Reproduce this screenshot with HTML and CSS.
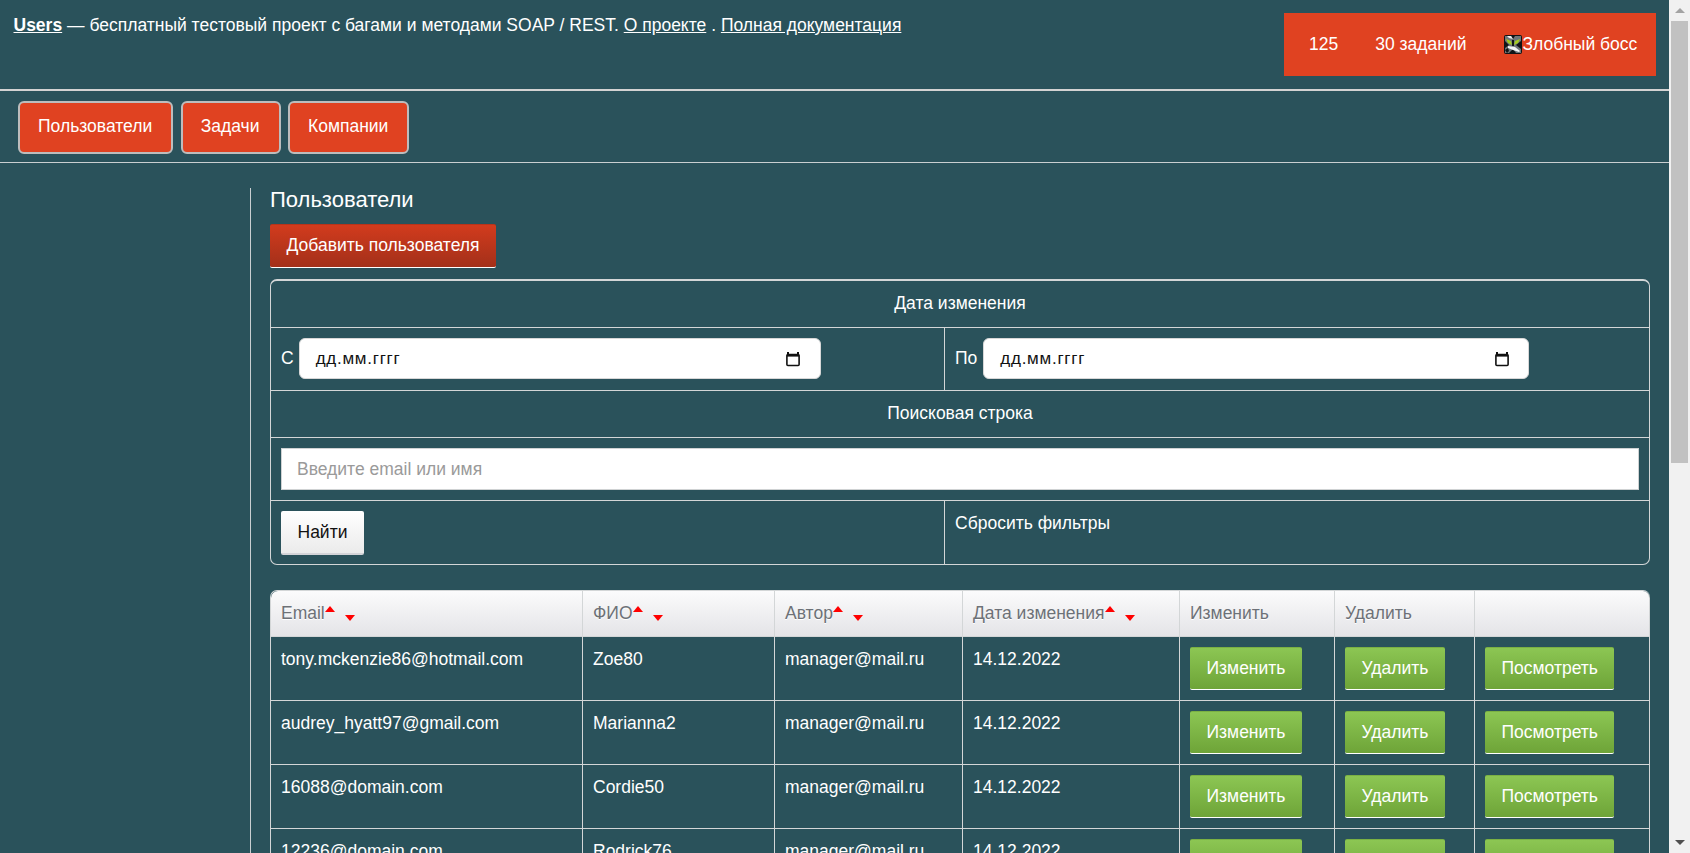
FILE: index.html
```html
<!DOCTYPE html>
<html lang="ru">
<head>
<meta charset="utf-8">
<title>Users</title>
<link rel="stylesheet" href="styles.css">
</head>
<body>
<div class="viewport">
  <div class="page">
    <header class="topbar">
      <p class="intro"><a class="brand" href="#">Users</a> — бесплатный тестовый проект с багами и методами SOAP / REST. <a href="#">О проекте</a> . <a href="#">Полная документация</a></p>
      <div class="userbox">
        <span>125</span>
        <span>30 заданий</span>
        <span class="boss">
          <svg class="avatar" width="18" height="19" viewBox="0 0 18 19">
            <rect width="18" height="19" rx="2" fill="#111416"/>
            <path d="M1 1h6l2 3 2-3h6v5l-5 4 5 4v4h-5l-3-4-4 4H1v-5l4-3-4-4z" fill="#6f7679"/>
            <path d="M2 4l5 2 1 4-4-2z" fill="#a4cc1e"/>
            <path d="M16 4l-5 2-1 4 4-2z" fill="#a4cc1e"/>
            <path d="M3 1h4l2 3-4-1z" fill="#eceeee"/>
            <path d="M4 11l7 1 5 4-1 1-6-2-5-2z" fill="#f4f5f5"/>
            <path d="M8 5h2v6H8zM1 15l3-2 1 3-2 2z" fill="#111416"/>
          </svg>Злобный босс
        </span>
      </div>
    </header>

    <nav class="mainnav">
      <a class="navbtn" href="#">Пользователи</a>
      <a class="navbtn" href="#">Задачи</a>
      <a class="navbtn" href="#">Компании</a>
    </nav>

    <main class="layout">
      <aside class="sidebar"></aside>
      <section class="content">
        <h1 class="title">Пользователи</h1>
        <a class="btn btn-red" href="#">Добавить пользователя</a>

        <table class="filters">
          <colgroup><col class="f-left"><col class="f-right"></colgroup>
          <tbody>
            <tr class="f-head"><td colspan="2">Дата изменения</td></tr>
            <tr class="f-date">
              <td>
                <label class="datefield">С
                  <span class="dateinput dateinput-a"><span>дд.мм.гггг</span>
                    <svg width="16" height="16" viewBox="0 0 16 16"><path d="M3 1v2M13 1v2" stroke="#111" stroke-width="2"/><rect x="1.9" y="3.5" width="12.2" height="11" rx="1" fill="none" stroke="#111" stroke-width="1.6"/><path d="M2 3h12v2.6H2z" fill="#111"/></svg>
                  </span>
                </label>
              </td>
              <td>
                <label class="datefield">По
                  <span class="dateinput dateinput-b"><span>дд.мм.гггг</span>
                    <svg width="16" height="16" viewBox="0 0 16 16"><path d="M3 1v2M13 1v2" stroke="#111" stroke-width="2"/><rect x="1.9" y="3.5" width="12.2" height="11" rx="1" fill="none" stroke="#111" stroke-width="1.6"/><path d="M2 3h12v2.6H2z" fill="#111"/></svg>
                  </span>
                </label>
              </td>
            </tr>
            <tr class="f-head"><td colspan="2">Поисковая строка</td></tr>
            <tr class="f-search"><td colspan="2"><input class="search" type="text" placeholder="Введите email или имя"></td></tr>
            <tr class="f-actions">
              <td><button class="btn btn-white" type="button">Найти</button></td>
              <td class="reset">Сбросить фильтры</td>
            </tr>
          </tbody>
        </table>

        <table class="users">
          <colgroup>
            <col class="c-email"><col class="c-name"><col class="c-author"><col class="c-date"><col class="c-edit"><col class="c-del"><col class="c-view">
          </colgroup>
          <thead>
            <tr>
              <th>Email<i class="up"></i><i class="down"></i></th>
              <th>ФИО<i class="up"></i><i class="down"></i></th>
              <th>Автор<i class="up"></i><i class="down"></i></th>
              <th>Дата изменения<i class="up"></i><i class="down"></i></th>
              <th>Изменить</th>
              <th>Удалить</th>
              <th></th>
            </tr>
          </thead>
          <tbody>
            <tr><td>tony.mckenzie86@hotmail.com</td><td>Zoe80</td><td>manager@mail.ru</td><td>14.12.2022</td><td><a class="btn btn-green" href="#">Изменить</a></td><td><a class="btn btn-green" href="#">Удалить</a></td><td><a class="btn btn-green" href="#">Посмотреть</a></td></tr>
            <tr><td>audrey_hyatt97@gmail.com</td><td>Marianna2</td><td>manager@mail.ru</td><td>14.12.2022</td><td><a class="btn btn-green" href="#">Изменить</a></td><td><a class="btn btn-green" href="#">Удалить</a></td><td><a class="btn btn-green" href="#">Посмотреть</a></td></tr>
            <tr><td>16088@domain.com</td><td>Cordie50</td><td>manager@mail.ru</td><td>14.12.2022</td><td><a class="btn btn-green" href="#">Изменить</a></td><td><a class="btn btn-green" href="#">Удалить</a></td><td><a class="btn btn-green" href="#">Посмотреть</a></td></tr>
            <tr><td>12236@domain.com</td><td>Rodrick76</td><td>manager@mail.ru</td><td>14.12.2022</td><td><a class="btn btn-green" href="#">Изменить</a></td><td><a class="btn btn-green" href="#">Удалить</a></td><td><a class="btn btn-green" href="#">Посмотреть</a></td></tr>
          </tbody>
        </table>
      </section>
    </main>
  </div>

  <div class="scrollbar" aria-hidden="true">
    <div class="sb-btn"><i class="sb-up"></i></div>
    <div class="sb-track"><div class="sb-thumb"></div></div>
    <div class="sb-btn"><i class="sb-down"></i></div>
  </div>
</div>
</body>
</html>
```

FILE: styles.css
```css
* { box-sizing: border-box; }

html, body {
  margin: 0;
  height: 100%;
  overflow: hidden;
}

body {
  background: #2a525b;
  color: #fff;
  font-family: "Liberation Sans", Arial, sans-serif;
  font-size: 17.5px;
  line-height: 25px;
}

a { color: #fff; }

.viewport {
  display: flex;
  height: 100vh;
}

.page {
  flex: 1;
  min-width: 0;
  overflow: hidden;
}

/* top bar */
.topbar {
  display: flex;
  justify-content: space-between;
  align-items: flex-start;
  height: 91px;
  padding: 13px 13px 0 13.5px;
  border-bottom: 2px solid #d3d3d3;
}

.intro { margin: 0; }
.brand { font-weight: bold; }

.userbox {
  display: flex;
  align-items: center;
  gap: 37px;
  height: 63px;
  width: 372px;
  padding: 0 19px 0 25px;
  background: #e04221;
  white-space: nowrap;
}

.boss {
  display: flex;
  align-items: center;
  margin-left: 1px;
}

.avatar { display: block; }

/* main nav */
.mainnav {
  display: flex;
  gap: 7.5px;
  height: 72px;
  padding: 10px 0 0 18px;
  border-bottom: 1px solid #c9cfd1;
}

.navbtn {
  height: 53px;
  padding: 0 19px 0 18px;
  line-height: 46px;
  background: #e04221;
  border: 2px solid #bdbdbd;
  border-radius: 6px;
  text-decoration: none;
}

/* page layout */
.layout {
  display: grid;
  grid-template-columns: 250px 1fr;
  padding: 25px 19px 0 0;
}

.content {
  min-width: 0;
  padding-left: 19px;
  border-left: 1px solid #c9cfd1;
}

.title {
  margin: 0 0 12px;
  font-size: 22px;
  line-height: 24px;
  font-weight: normal;
}

/* buttons */
.btn {
  display: inline-block;
  height: 43px;
  padding: 0 16.5px;
  font: inherit;
  line-height: 40px;
  text-decoration: none;
  border: 0;
  border-radius: 2px;
}

.btn-red {
  display: block;
  width: fit-content;
  height: 44px;
  line-height: 41px;
  background: linear-gradient(#d23b1d, #a3301a);
  border-bottom: 1px solid #fff;
  border-top: 1px solid #b8341a;
  color: #fff;
}

.btn-white {
  display: block;
  height: 44px;
  line-height: 38px;
  background: linear-gradient(#fff, #ebebeb);
  border-bottom: 2px solid #d4d4d8;
  color: #111;
}

.btn-green {
  line-height: 41px;
  background: linear-gradient(#8cc653, #6ea438);
  border-top: 1px solid #7bb043;
  border-bottom: 1px solid #fff;
  color: #fff;
}

/* filter table */
.filters,
.users {
  width: 100%;
  table-layout: fixed;
  border-collapse: separate;
  border-spacing: 0;
}

.filters {
  margin-top: 11px;
  border: 1px solid #d3d6d7;
  border-top-width: 2px;
  border-radius: 7px;
}

.f-left { width: 673px; }

.filters td {
  padding: 10px;
  border-bottom: 1px solid #d3d6d7;
  vertical-align: top;
}

.filters tr:last-child td {
  padding-bottom: 9px;
  border-bottom: 0;
}

.filters td + td { border-left: 1px solid #d3d6d7; }

.f-head td {
  height: 47px;
  text-align: center;
}

.f-date td { height: 63px; }

.datefield {
  display: flex;
  align-items: center;
  gap: 5px;
}

.dateinput {
  display: flex;
  align-items: center;
  justify-content: space-between;
  height: 41px;
  padding: 0 19px 0 16px;
  color: #111;
  font-size: 17px;
  letter-spacing: .74px;
  background: #fff;
  border: 1px solid #d7d7d7;
  border-radius: 6px;
}

.dateinput-a { width: 522px; }
.dateinput-b { width: 546px; margin-left: 1px; padding-right: 18px; }

.search {
  display: block;
  width: 100%;
  height: 42px;
  padding: 0 15px;
  font: inherit;
  color: #222;
  background: #fff;
  border: 1px solid #cfd2d3;
  border-radius: 0;
}

.search::placeholder { color: #9a9a9a; opacity: 1; }

.f-search td { height: 63px; }
.f-actions td { height: 63px; }

/* users table */
.users {
  margin-top: 25px;
  border-top: 1px solid #d3d6d7;
  border-left: 1px solid #d3d6d7;
  border-radius: 7px 7px 0 0;
}

.c-email { width: 312px; }
.c-name { width: 192px; }
.c-author { width: 188px; }
.c-date { width: 217px; }
.c-edit { width: 155px; }
.c-del { width: 140px; }

.users th,
.users td {
  padding: 10px;
  vertical-align: top;
  text-align: left;
  border-right: 1px solid #d3d6d7;
  border-bottom: 1px solid #d3d6d7;
}

.users th {
  height: 46px;
  font-weight: normal;
  color: #6d7177;
  background: linear-gradient(#fbfbfc, #e4e4e7);
  text-shadow: 0 1px 0 #fff;
  white-space: nowrap;
}

.users th:first-child { border-top-left-radius: 7px; }
.users th:last-child { border-top-right-radius: 7px; }

.users td {
  height: 64px;
  white-space: nowrap;
}

.up,
.down {
  display: inline-block;
  width: 0;
  height: 0;
  border-left: 5.5px solid transparent;
  border-right: 5.5px solid transparent;
}

.up {
  border-bottom: 6px solid #f00;
  vertical-align: 7px;
}

.down {
  margin-left: 10px;
  border-top: 6px solid #f00;
  vertical-align: -2px;
}

/* scrollbar */
.scrollbar {
  display: flex;
  flex-direction: column;
  flex: none;
  width: 21px;
  background: #f1f1f1;
}

.sb-btn {
  display: flex;
  align-items: center;
  justify-content: center;
  flex: none;
  height: 21px;
}

.sb-up,
.sb-down {
  width: 0;
  height: 0;
  border-left: 5px solid transparent;
  border-right: 5px solid transparent;
}

.sb-up { border-bottom: 5px solid #a3a3a3; }
.sb-down { border-top: 5px solid #505050; }

.sb-track {
  flex: 1;
  padding: 0 2px;
}

.sb-thumb {
  height: 442px;
  background: #c1c1c1;
}
```
